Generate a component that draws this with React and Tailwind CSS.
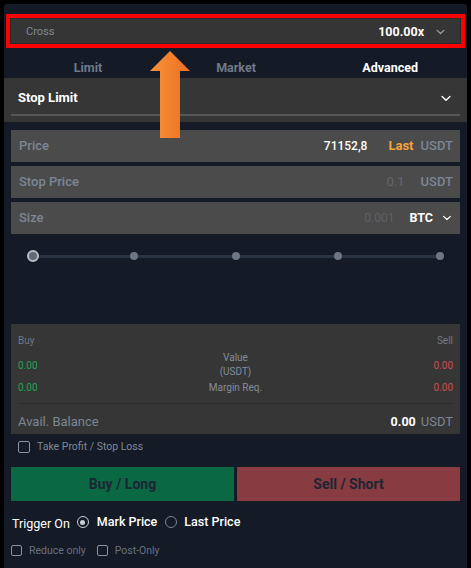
import React from "react";

const Chevron = ({ className = "" }) => (
  <svg viewBox="0 0 12 8" className={className} fill="none" stroke="currentColor" strokeWidth="1.6" strokeLinecap="round" strokeLinejoin="round">
    <path d="M1.5 1.8 L6 6 L10.5 1.8" />
  </svg>
);

const Box = ({ className = "" }) => (
  <span className={"inline-block rounded-[2px] border-[1.5px] border-[#8a93a0] " + className} />
);

export default function App() {
  return (
    <div className="min-h-[568px] bg-black pt-[4px] pl-[4px] pr-[4px] text-[13px]" style={{ fontFamily: "Roboto, 'Liberation Sans', sans-serif" }}>
      <div className="relative min-h-[564px] w-[463px] rounded-t-[3px] bg-[#141a26]">
        {/* Cross / leverage bar */}
        <div className="pt-[10px] px-[2px]">
          <div className="h-[34px] border-[4px] border-[#ff0000] bg-[#2a2a2a] p-[1px]">
            <div className="flex h-full items-center bg-[#353535] pl-[15px] pr-[15px] pt-[3px]">
              <span className="text-[11px] text-[#7f8a98]">Cross</span>
              <span className="ml-auto text-[12.5px] font-bold text-white">100.00x</span>
              <Chevron className="ml-[12px] mb-[2px] h-[6px] w-[9px] text-[#9aa3ae]" />
            </div>
          </div>
        </div>

        {/* Tabs */}
        <div className="grid h-[30px] grid-cols-[168px_128px_1fr] items-center pt-[10px] text-[12.5px] font-bold">
          <span className="text-center text-[#6f7a89]">Limit</span>
          <span className="text-center text-[#6f7a89]">Market</span>
          <span className="pr-[49px] text-right text-white">Advanced</span>
        </div>

        {/* Stop limit */}
        <div className="h-[44px] bg-[#363636] px-[7px] pt-[10px]">
          <div className="flex h-[28px] items-center border-b-2 border-[#575757] pl-[7px] pr-[8px] pb-[6px]">
            <span className="font-bold text-white">Stop Limit</span>
            <Chevron className="ml-auto h-[7px] w-[12px] text-white" />
          </div>
        </div>

        {/* Inputs */}
        <div className="flex flex-col gap-[4px] px-[7px] pt-[8px]">
          <div className="flex h-[32px] items-center bg-[#4b4b4b] pl-[8px] pr-[7px]">
            <span className="font-medium text-[#7c8694]">Price</span>
            <span className="ml-auto text-[12px] font-medium text-white">71152,8</span>
            <span className="ml-[21px] font-bold text-[#f6a33a]">Last</span>
            <span className="ml-[7px] font-medium text-[#7c8694]">USDT</span>
          </div>
          <div className="flex h-[32px] items-center bg-[#4b4b4b] pl-[8px] pr-[7px]">
            <span className="font-medium text-[#7c8694]">Stop Price</span>
            <span className="ml-auto text-[#626870]">0.1</span>
            <span className="ml-[16px] font-medium text-[#7c8694]">USDT</span>
          </div>
          <div className="flex h-[32px] items-center bg-[#4b4b4b] pl-[8px] pr-[8px]">
            <span className="font-medium text-[#7c8694]">Size</span>
            <span className="ml-auto text-[12px] text-[#5c6168]">0.001</span>
            <span className="ml-[15px] text-[12.5px] font-bold text-white">BTC</span>
            <Chevron className="ml-[9px] h-[6px] w-[10px] text-white" />
          </div>
        </div>

        {/* Slider */}
        <div className="relative mx-[29px] mt-[16px] h-[12px]">
          <div className="absolute left-0 right-0 top-[5px] h-[3px] bg-[#2a3341]" />
          <div className="absolute left-[-6px] top-0 h-[12px] w-[12px] rounded-full border-2 border-[#b9bdc3] bg-[#626a74]" />
          <div className="absolute left-[97px] top-[2px] h-[8px] w-[8px] rounded-full bg-[#6e7684]" />
          <div className="absolute left-[199px] top-[2px] h-[8px] w-[8px] rounded-full bg-[#6e7684]" />
          <div className="absolute left-[301px] top-[2px] h-[8px] w-[8px] rounded-full bg-[#6e7684]" />
          <div className="absolute left-[403px] top-[2px] h-[8px] w-[8px] rounded-full bg-[#6e7684]" />
        </div>

        {/* Info box */}
        <div className="mx-[7px] mt-[62px] h-[110px] bg-[#363636] px-[7px] text-[10px]">
          <div className="flex pt-[9px] text-[#6f7987]">
            <span>Buy</span>
            <span className="ml-auto">Sell</span>
          </div>
          <div className="mt-[3px] flex items-center">
            <span className="w-[60px] text-[#1aa653]">0.00</span>
            <span className="flex-1 text-center leading-[14px] text-[#838d9a]">Value<br />(USDT)</span>
            <span className="w-[60px] text-right text-[#d04b4b]">0.00</span>
          </div>
          <div className="mt-[1px] flex items-center">
            <span className="w-[60px] text-[#1aa653]">0.00</span>
            <span className="flex-1 text-center text-[#838d9a]">Margin Req.</span>
            <span className="w-[60px] text-right text-[#d04b4b]">0.00</span>
          </div>
          <div className="mt-[8px] h-[1px] bg-[#2d2d2d]" />
          <div className="flex h-[34px] items-center pt-[2px] text-[13px]">
            <span className="text-[#7c8694]">Avail. Balance</span>
            <span className="ml-auto text-[12.5px] font-bold text-white">0.00</span>
            <span className="ml-[5px] text-[#7c8694]">USDT</span>
          </div>
        </div>

        {/* Take profit */}
        <div className="flex h-[26px] items-center pl-[14px] text-[10.5px] text-[#7f8997]">
          <Box className="h-[12px] w-[12px]" />
          <span className="ml-[7px]">Take Profit / Stop Loss</span>
        </div>

        {/* Buttons */}
        <div className="mt-[7px] grid grid-cols-2 gap-[3px] px-[7px]">
          <div className="flex h-[34px] items-center justify-center bg-[#0a6843] text-[14px] font-bold text-[#1c2533]">Buy / Long</div>
          <div className="flex h-[34px] items-center justify-center bg-[#883b41] text-[14px] font-bold text-[#1c2533]">Sell / Short</div>
        </div>

        {/* Trigger on */}
        <div className="mt-[10px] flex items-center pl-[8px] text-[12.5px] text-white">
          <span className="mt-[4px]">Trigger On</span>
          <span className="ml-[7px] flex h-[12px] w-[12px] items-center justify-center rounded-full border-[1.5px] border-[#c9ced4]">
            <span className="h-[5px] w-[5px] rounded-full bg-[#c9ced4]" />
          </span>
          <span className="ml-[8px] font-medium">Mark Price</span>
          <span className="ml-[8px] h-[12px] w-[12px] rounded-full border-[1.5px] border-[#7c8490]" />
          <span className="ml-[7px] font-medium">Last Price</span>
        </div>

        {/* Bottom options */}
        <div className="mt-[9px] flex items-center pl-[7px] text-[10.5px] text-[#687280]">
          <Box className="h-[11px] w-[11px] border-[#7c8490]" />
          <span className="ml-[7px]">Reduce only</span>
          <Box className="ml-[11px] h-[11px] w-[11px] border-[#7c8490]" />
          <span className="ml-[7px]">Post-Only</span>
        </div>

        {/* Orange arrow overlay */}
        <svg className="absolute left-[146px] top-[47px]" width="40" height="88" viewBox="0 0 40 88">
          <defs>
            <linearGradient id="og" x1="0" x2="1" y1="0" y2="0">
              <stop offset="0" stopColor="#f8913a" />
              <stop offset="1" stopColor="#ea7122" />
            </linearGradient>
          </defs>
          <path d="M20 0 L40 20 L30 20 L30 87 L10 87 L10 20 L0 20 Z" fill="url(#og)" />
        </svg>
      </div>
    </div>
  );
}
